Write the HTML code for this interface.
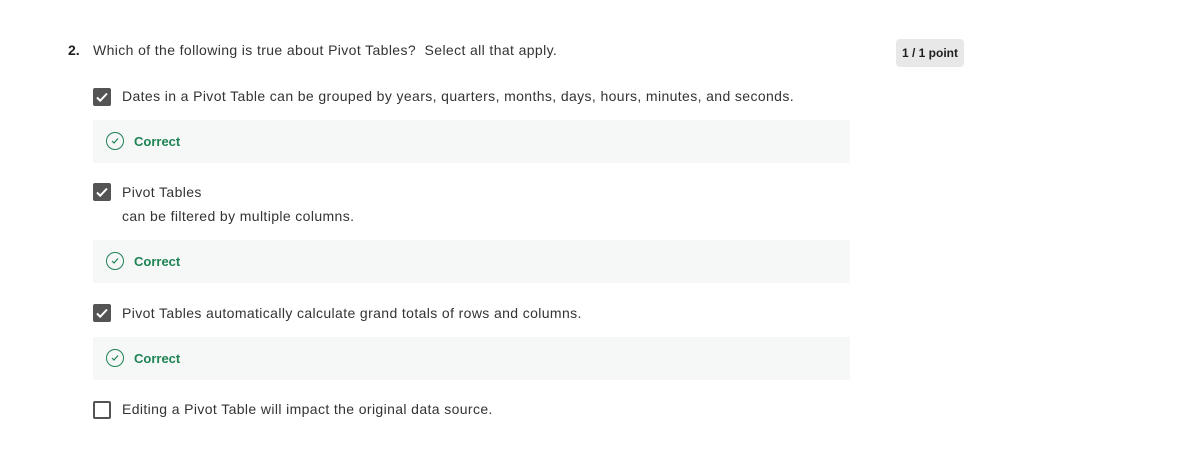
<!DOCTYPE html>
<html><head><style>
body{margin:0;width:1192px;height:454px;background:#fff;font-family:"Liberation Sans",sans-serif;color:#1f1f1f;position:relative;overflow:hidden}
.a{position:absolute;white-space:nowrap}
.t{font-size:14px;color:#333;letter-spacing:0.38px}
.cb{position:absolute;left:93px;width:18px;height:18px;border-radius:2px;background:#545454;box-sizing:border-box}
.cb svg{position:absolute;left:2px;top:2px}
.cb.e{background:#fff;border:2px solid #545454}
.fb{position:absolute;left:93px;width:757px;height:43px;background:#f5f8f7}
.fb .ic{position:absolute;left:13px;top:12px;width:18px;height:18px;border:1.3px solid #1f8354;border-radius:50%;box-sizing:border-box}
.fb .ic svg{position:absolute;left:3px;top:3px}
.fb span{position:absolute;left:41px;top:14px;font-size:13px;font-weight:bold;color:#1f8354}
</style></head><body>
<div class="a" style="left:68px;top:42px;font-size:14px;font-weight:bold">2.</div>
<div class="a t" style="left:93px;top:42px">Which of the following is true about Pivot Tables?&nbsp; Select all that apply.</div>
<div class="a" style="left:896px;top:39px;width:68px;height:28px;background:#e8e8e8;border-radius:4px;font-size:12px;font-weight:bold;line-height:28px;text-align:center">1 / 1 point</div>

<div class="cb" style="top:88px"><svg width="14" height="14" viewBox="0 0 14 14"><path d="M2 7.5l3.2 3.2L12 3.5" stroke="#fff" stroke-width="2" fill="none"/></svg></div>
<div class="a t" style="left:122px;top:88px">Dates in a Pivot Table can be grouped by years, quarters, months, days, hours, minutes, and seconds.</div>
<div class="fb" style="top:120px"><div class="ic"><svg width="10" height="10" viewBox="0 0 10 10"><path d="M2 5l2 2 4-4.5" stroke="#1f8354" stroke-width="1.2" fill="none"/></svg></div><span>Correct</span></div>

<div class="cb" style="top:183px"><svg width="14" height="14" viewBox="0 0 14 14"><path d="M2 7.5l3.2 3.2L12 3.5" stroke="#fff" stroke-width="2" fill="none"/></svg></div>
<div class="a t" style="left:122px;top:184px">Pivot Tables</div>
<div class="a t" style="left:122px;top:208px">can be filtered by multiple columns.</div>
<div class="fb" style="top:240px"><div class="ic"><svg width="10" height="10" viewBox="0 0 10 10"><path d="M2 5l2 2 4-4.5" stroke="#1f8354" stroke-width="1.2" fill="none"/></svg></div><span>Correct</span></div>

<div class="cb" style="top:304px"><svg width="14" height="14" viewBox="0 0 14 14"><path d="M2 7.5l3.2 3.2L12 3.5" stroke="#fff" stroke-width="2" fill="none"/></svg></div>
<div class="a t" style="left:122px;top:305px">Pivot Tables automatically calculate grand totals of rows and columns.</div>
<div class="fb" style="top:337px"><div class="ic"><svg width="10" height="10" viewBox="0 0 10 10"><path d="M2 5l2 2 4-4.5" stroke="#1f8354" stroke-width="1.2" fill="none"/></svg></div><span>Correct</span></div>

<div class="cb e" style="top:401px"></div>
<div class="a t" style="left:122px;top:401px">Editing a Pivot Table will impact the original data source.</div>
</body></html>
